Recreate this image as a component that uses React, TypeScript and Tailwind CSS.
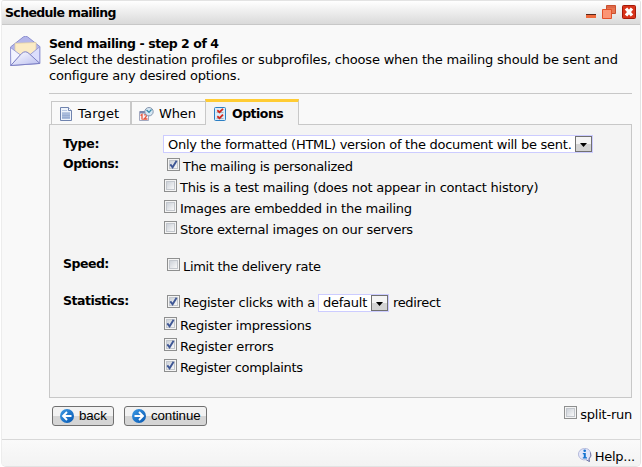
import type { ReactNode } from 'react';

function Envelope() {
  return (
    <svg className="h-[31px] w-[31px]" viewBox="0 0 31 31">
      <defs>
        <linearGradient id="env" x1="0" y1="0" x2="1" y2="1">
          <stop offset="0" stopColor="#ffffff" />
          <stop offset="1" stopColor="#b9bdf0" />
        </linearGradient>
      </defs>
      <path d="M.5 11 13.5.8Q15.5-.2 17.5.8L29.8 10.5v17L.7 29.5Z" fill="#b4b6ea" stroke="#8d90cf" />
      <path d="M5 7.300 26 6.500V20L15 24 5 20Z" fill="#fbebc5" stroke="#dfcda2" strokeWidth=".7" />
      <path d="M.5 11.5 10.5 19 .8 29.4Z" fill="#f2f3ff" stroke="#8d90cf" strokeWidth=".8" />
      <path d="M29.7 10.8 20 18.7l9.7 8.7Z" fill="#dcdefc" stroke="#8d90cf" strokeWidth=".8" />
      <path d="M.8 29.5 11.5 17.6Q15.3 14 19 17.5L29.8 27.4Z" fill="url(#env)" stroke="#7e81c4" />
    </svg>
  );
}

function PageIcon() {
  return (
    <svg className="h-[14px] w-3" viewBox="0 0 12 14">
      <path d="M.5.5h8l3 3v10H.5Z" fill="#eef3fb" stroke="#6f83ae" />
      <path d="M8.5.5v3h3" fill="#fff" stroke="#6f83ae" />
      <path d="M2 3.5h5M2 5.5h8" stroke="#b9c8e2" />
      <path d="M2 6h8v6H2Z" fill="#a9bbdb" />
      <path d="M2 8.5h8M2 10.5h8" stroke="#8fa4cc" strokeWidth=".6" />
    </svg>
  );
}

function ScheduleIcon() {
  return (
    <svg className="h-[14px] w-[15px]" viewBox="0 0 15 14">
      <path d="M.5 4.5h9v9h-9Z" fill="#f4f5fa" stroke="#a3a9c0" />
      <path d="M1 4h9v2.5H1Z" fill="#7989ad" />
      <path d="M1.5 8.5 3 7.5v5M5 8q2.5-1.2 2.5.8Q7 10.500 5 12h3.500" fill="none" stroke="#e8563c" strokeWidth="1.300" />
      <circle cx="10" cy="4.700" r="4.200" fill="#d5e8f4" stroke="#8795ad" />
      <path d="m7.500 3 2.500 2.300L12.500 2.500" fill="none" stroke="#398aa9" strokeWidth="1.200" />
    </svg>
  );
}

function ChecklistIcon() {
  return (
    <svg className="h-[14px] w-3" viewBox="0 0 12 14">
      <rect x=".5" y=".5" width="11" height="13" rx="1" fill="#dcecf8" stroke="#2b7fc4" />
      <path d="M2.500 5.500h7M2.500 11.500h7" stroke="#a8b5c2" />
      <path d="m3.300 3.300 2.200 1.900L9 1.800M3.300 9.300l2.200 1.900L9 7.600" fill="none" stroke="#d1281d" strokeWidth="1.800" />
    </svg>
  );
}

function WindowControls() {
  return (
    <svg className="mt-[5px] h-[14px] w-[50px]" viewBox="0 0 50 14">
      <path d="M0 9h10v4H0Z" fill="#ef6a3c" />
      <path d="M0 9h10v1H0Z" fill="#5a2618" />
      <path d="M20.500.5h9v8h-9Z" fill="#e87550" stroke="#c9502f" />
      <path d="M21 1h8v2h-8Z" fill="#dd6748" />
      <path d="M16.500 4.500h9v9h-9Z" fill="#fb9575" stroke="#e2512a" />
      <rect x="36.500" y=".5" width="13" height="13" rx="1" fill="#d8331a" stroke="#a31808" />
      <path d="m40 3.500 6 7m0-7-6 7" stroke="#fff" strokeWidth="3.200" />
    </svg>
  );
}

function ArrowIcon({ back = false }: { back?: boolean }) {
  return (
    <svg className="h-[14px] w-[14px] shrink-0" viewBox="0 0 14 14">
      <defs>
        <linearGradient id="ball" x1="0" y1="0" x2="1" y2="1">
          <stop offset="0" stopColor="#3d9be6" />
          <stop offset="1" stopColor="#0656b0" />
        </linearGradient>
      </defs>
      <circle cx="7" cy="7" r="7" fill="url(#ball)" />
      <path
        d={back ? 'M11.500 7h-8M7 3 3 7l4 4' : 'M2.500 7h8M7 3l4 4-4 4'}
        fill="none"
        stroke="#fff"
        strokeWidth="1.900"
      />
    </svg>
  );
}

function InfoIcon() {
  return (
    <svg className="h-[14px] w-[14px]" viewBox="0 0 14 14">
      <path d="M6.500.5a6 5.700 0 1 0 1.500 11.200L11.500 13.500 11 10.500A5.800 5.800 0 0 0 6.500.5Z" fill="#e3e6fa" stroke="#b5badb" />
      <path d="M12.500 4.500q1.500 4-1.500 6.500l.5 2.500-3-1.500" fill="none" stroke="#7579a8" />
      <circle cx="6.700" cy="2.700" r="1.300" fill="#1673d0" />
      <path d="M4.800 5h3v4.300h1.200V10.500H4.800V9.300h1V6.200h-1Z" fill="#1673d0" />
    </svg>
  );
}

function Checkbox({ checked = false, className = '' }: { checked?: boolean; className?: string }) {
  return (
    <span className={`block h-[13px] w-[13px] shrink-0 border border-[#8e8f8f] bg-[#f4f4f4] p-px ${className}`}>
      <span className="block h-[9px] w-[9px] border border-[#c3c7cd] bg-linear-to-br from-[#cdd2d9] to-[#f8f8f8]">
        {checked && (
          <svg className="-ml-px -mt-px h-[9px] w-[9px]" viewBox="0 0 9 9">
            <path d="M1.300 4.300 3.600 7.300 7.600.8" fill="none" stroke="#3f5795" strokeWidth="1.900" />
          </svg>
        )}
      </span>
    </span>
  );
}

type OptionProps = { checked?: boolean; first?: boolean; tracking?: string; children: ReactNode };

function Option({ checked, first, tracking = '', children }: OptionProps) {
  return (
    <div className={`flex h-[21px] items-start ${first ? 'pl-[3px]' : ''}`}>
      <Checkbox checked={checked} />
      <span className={`ml-[3px] mt-px leading-4 ${tracking}`}>{children}</span>
    </div>
  );
}

function Select({ className, children }: { className: string; children: ReactNode }) {
  return (
    <div className={`flex h-[18px] items-center justify-between border border-[#ccccff] bg-white pl-1 ${className}`}>
      <span className="leading-4">{children}</span>
      <span className="flex h-4 w-[17px] shrink-0 items-center justify-center border border-[#707070] bg-linear-to-b from-[#f4f4f4] from-50% to-[#d3d3d3] to-50%">
        <svg className="mt-0.5 h-1 w-[7px]" viewBox="0 0 7 4">
          <path d="M0 0h7L3.500 4Z" fill="#000" />
        </svg>
      </span>
    </div>
  );
}

function Button({ className, icon, children }: { className: string; icon: ReactNode; children: ReactNode }) {
  return (
    <button
      className={`flex h-5 items-center rounded-[3px] border border-[#707070] bg-linear-to-b from-[#f2f2f2] from-50% to-[#d5d5d5] to-50% pl-[7px] font-['Liberation_Sans',Arial,sans-serif] text-[13.3px] tracking-[-0.1px] ${className}`}
    >
      {icon}
      <span className="ml-[5px] leading-4">{children}</span>
    </button>
  );
}

const bold = 'text-[12.5px] font-bold';

export default function App() {
  return (
    <div className="h-[467px] w-[642px] bg-white pl-px font-['DejaVu_Sans',Verdana,sans-serif] text-[13px] leading-4 tracking-[-0.24px] whitespace-nowrap text-black">
      <div className="flex h-[467px] w-[640px] flex-col overflow-hidden rounded-b-[5px] rounded-t-[3px] border border-[#e3e3e3] border-l-[#ededed] bg-[#f9f9f9]">
        <header className="flex h-6 shrink-0 justify-between border-b border-[#c8c8c8] bg-linear-to-b from-white to-[#dadada] pl-[3px] pr-[4px]">
          <h1 className={`mt-1 leading-4 tracking-[-0.63px] ${bold}`}>Schedule mailing</h1>
          <div className="-mt-px"><WindowControls /></div>
        </header>

        <div className="flex h-[68px] shrink-0 pl-2 pt-[11px]">
          <Envelope />
          <div className="ml-2">
            <h2 className={`leading-4 tracking-[-0.44px] ${bold}`}>Send mailing - step 2 of 4</h2>
            <p className="tracking-[-0.2px]">
              Select the destination profiles or subprofiles, choose when the mailing should be sent and
              <br />
              configure any desired options.
            </p>
          </div>
        </div>

        <main className="ml-[47px] flex w-[583px] flex-col border-t border-[#c8c8c8] pt-[5px]">
          <nav className="relative z-10 -mb-px flex items-end pl-0.5">
            <div className="flex h-6 w-20 items-center border border-[#c8c8c8] pl-2 pt-px">
              <PageIcon />
              <span className="ml-[6px] tracking-[0.2px]">Target</span>
            </div>
            <div className="flex h-6 w-[74px] items-center border border-r-0 border-[#c8c8c8] pl-[7px] pt-px">
              <ScheduleIcon />
              <span className="ml-[5px] tracking-[-0.15px]">When</span>
            </div>
            <div className="flex h-[26px] w-[94px] items-center border-t-3 border-r border-l border-[#c8c8c8] border-t-[#ffcc33] bg-[#f4f4f4] pl-2">
              <ChecklistIcon />
              <span className={`ml-[6px] mt-px tracking-[-0.5px] ${bold}`}>Options</span>
            </div>
          </nav>

          <section className="h-[274px] border border-[#c8c8c8] bg-[#f4f4f4] pl-[13px] pt-[10px]">
            <div className="flex h-[23px]">
              <div className={`mt-px w-[100px] leading-4 tracking-[-0.3px] ${bold}`}>Type:</div>
              <Select className="w-[430px]">
                <span className="relative top-px tracking-[-0.27px]">
                  Only the formatted (HTML) version of the document will be sent.
                </span>
              </Select>
            </div>
            <div className="flex h-[100px]">
              <div className={`-mt-[2px] w-[101px] leading-4 tracking-[-0.5px] ${bold}`}>Options:</div>
              <div>
                <Option checked first tracking="tracking-[-0.3px]">The mailing is personalized</Option>
                <Option>This is a test mailing (does not appear in contact history)</Option>
                <Option>Images are embedded in the mailing</Option>
                <Option>Store external images on our servers</Option>
              </div>
            </div>
            <div className="flex h-[36px]">
              <div className={`-mt-[2px] w-[101px] leading-4 tracking-[-0.5px] ${bold}`}>Speed:</div>
              <Option first tracking="tracking-[-0.3px]">Limit the delivery rate</Option>
            </div>
            <div className="flex">
              <div className={`-mt-px w-[101px] leading-4 tracking-[-0.5px] ${bold}`}>Statistics:</div>
              <div>
                <div className="flex h-[23px] items-start">
                  <div className="flex w-[154px] items-start pl-[3px]">
                    <Checkbox checked className="mt-px" />
                    <span className="ml-[3px] mt-px">Register clicks with a</span>
                  </div>
                  <Select className="w-[71px]">default</Select>
                  <span className="ml-1 mt-px tracking-[-0.35px]">redirect</span>
                </div>
                <Option checked tracking="tracking-[-0.2px]">Register impressions</Option>
                <Option checked tracking="tracking-[-0.15px]">Register errors</Option>
                <Option checked tracking="tracking-[-0.33px]">Register complaints</Option>
              </div>
            </div>
          </section>

          <div className="flex h-[41px] justify-between pl-[3px] pt-2">
            <div className="flex gap-[10px]">
              <Button className="w-[62px]" icon={<ArrowIcon back />}>back</Button>
              <Button className="w-[83px]" icon={<ArrowIcon />}>continue</Button>
            </div>
            <div className="flex items-start">
              <Checkbox />
              <span className="ml-[3px] mt-px">split-run</span>
            </div>
          </div>
        </main>

        <footer className="flex flex-1 justify-end border-t border-[#d8d8d8] bg-linear-to-b from-[#fafafa] to-[#f3f3f3] pr-[5px] pt-2">
          <InfoIcon />
          <span className="ml-[3px] mt-px">Help...</span>
        </footer>
      </div>
    </div>
  );
}
